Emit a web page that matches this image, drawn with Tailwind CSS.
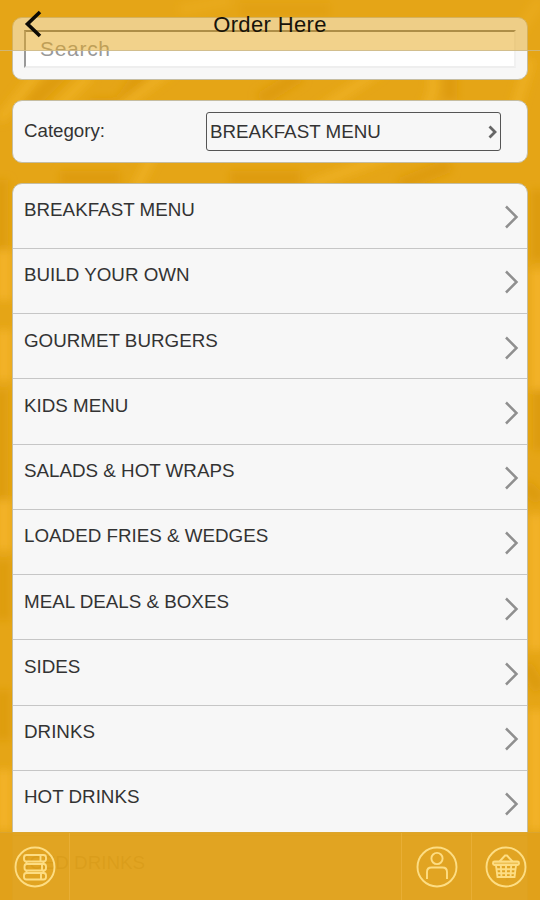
<!DOCTYPE html>
<html lang="en">
<head>
<meta charset="utf-8">
<title>Order Here</title>
<script src="https://cdn.jsdelivr.net/npm/@tailwindcss/browser@4"></script>
</head>
<body class="relative h-[900px] w-[540px] overflow-hidden bg-[#e5a516] font-['Liberation_Sans',Arial,sans-serif] text-[#333]">
<svg class="absolute inset-0 -z-10" width="540" height="900" viewBox="0 0 540 900" fill="none">
  <defs><filter id="soft" x="-20%" y="-20%" width="140%" height="140%"><feGaussianBlur stdDeviation="4"/></filter></defs>
  <g filter="url(#soft)">
    <path d="M30 105L75 60M90 105H120L150 60M260 100L300 75M450 65V100M60 178H120M230 178H300M400 185L450 165M240 10H330" stroke="#de9b0c" stroke-width="14"/>
    <path d="M0 120L40 70M55 110L90 75M110 115L170 70M320 110L380 70M425 110Q440 85 428 60M515 110L530 60M135 190L155 150M310 185L390 155M180 10L230 0M520 30L540 0" stroke="#eeb022" stroke-width="9"/>
    <path d="M0 180V250M0 390V500M3 560V620M3 690V740" stroke="#de9d0e" stroke-width="16"/>
    <path d="M4 250V300M4 330V380M4 500V550M4 770V830M538 270V390M536 515V650M536 710V830" stroke="#f3b226" stroke-width="16"/>
    <path d="M538 190V260M540 390V450M525 485L540 500M525 665L540 690" stroke="#dc9b10" stroke-width="14"/>
  </g>
</svg>

<main class="flex flex-col px-3 pt-[17px]">
  <section class="h-[63px] rounded-[10px] border border-[#c5bda2] bg-[#f7f7f7] px-[11px] pt-3">
    <div class="flex h-[38px] items-center border-2 border-t-[#777] border-r-[#f1f1f1] border-b-[#eee] border-l-[#999] bg-white pl-3.5 text-[21px] tracking-[0.7px] text-[#999]">Search</div>
  </section>
  <section class="mt-5 flex h-[63px] items-center justify-between rounded-[10px] border border-[#c5bda2] bg-[#f7f7f7] pr-[26px] pl-[11px]">
    <span class="text-[18.7px]">Category:</span>
    <div class="flex h-[39px] w-[295px] items-center justify-between rounded-[3px] border border-[#555] pr-[3px] pl-[3px]">
      <span class="pt-0.5 text-[18.8px]">BREAKFAST MENU</span>
      <svg width="9" height="14" viewBox="0 0 9 14" fill="none" stroke="#666" stroke-width="2.8"><path d="M1.500 1.500L7 7L1.500 12.500"/></svg>
    </div>
  </section>
  <ul id="menu" class="mt-[19.5px] rounded-t-[10px] border border-[#c5bda2] bg-[#f7f7f7]"></ul>
</main>

<header class="absolute inset-x-0 top-0 flex h-[51px] justify-center border-b border-[#c9b98d]/80 bg-[#e6a517]/50">
  <svg class="absolute top-[10px] left-6" width="18" height="28" viewBox="0 0 18 28" fill="none" stroke="#0c0a05" stroke-width="3.6"><path d="M16 2L3.500 14L16 26"/></svg>
  <h1 class="pt-[10px] text-[22px] leading-[30px] tracking-[0.35px] text-[#17130a]">Order Here</h1>
</header>

<footer class="absolute inset-x-0 bottom-0 flex h-[68px] border-t border-[#dba52f] bg-[#e0a11b]/97 text-[#fddd83]">
  <div class="flex w-[70px] items-center justify-center border-r border-[#e8ae35]">
    <svg width="42" height="42" viewBox="0 0 42 42" fill="none" stroke="currentColor" stroke-width="1.9"><circle cx="21" cy="21" r="19.5"/><rect x="10" y="9" width="22" height="6.500" rx="2.500"/><rect x="10.500" y="18" width="21.500" height="6.500" rx="2.500"/><rect x="10" y="27" width="22" height="6.500" rx="2.500"/><path d="M26.500 9v6M29.500 15.500v3M12.500 15.500v3M28 18v6M29.500 24.500v3M12.500 24.500v3M27 27v6"/></svg>
  </div>
  <div class="flex-1"></div>
  <div class="flex w-[70px] items-center justify-center border-l border-[#e8ae35]">
    <svg width="42" height="42" viewBox="0 0 42 42" fill="none" stroke="currentColor" stroke-width="1.9"><circle cx="21" cy="21" r="19.500"/><circle cx="21" cy="12.500" r="5.600"/><path d="M11 33V26Q11 21.500 15.500 21.500H26.500Q31 21.500 31 26V33"/></svg>
  </div>
  <div class="flex w-[69px] items-center justify-center border-l border-[#e8ae35]">
    <svg width="42" height="42" viewBox="0 0 42 42" fill="none" stroke="currentColor" stroke-width="1.9"><circle cx="21" cy="21" r="19.500"/><rect x="8" y="15.500" width="26" height="3.500" rx="1.500" fill="currentColor" fill-opacity=".5"/><path d="M14.500 15.500L20 9.500H22L27.500 15.500M11 19.500L12.500 31H29.500L31 19.500M15.800 20L16.500 31M21 20V31M26.200 20L25.500 31M11.500 23.300H30.500M12 27.200H30"/></svg>
  </div>
</footer>

<script>
const items = ["BREAKFAST MENU","BUILD YOUR OWN","GOURMET BURGERS","KIDS MENU","SALADS & HOT WRAPS","LOADED FRIES & WEDGES","MEAL DEALS & BOXES","SIDES","DRINKS","HOT DRINKS","ICED DRINKS"];
document.getElementById("menu").innerHTML = items.map(t => `
<li class="flex h-[65.25px] justify-between border-b border-[#c6c6c6] pr-[8px] pl-[11px]">
  <span class="pt-[15.5px] text-[18.8px] leading-[22px]">${t.replace("&","&amp;")}</span>
  <svg class="mt-[21.500px]" width="15" height="24" viewBox="0 0 15 24" fill="none" stroke="#8f8f8f" stroke-width="2.500"><path d="M2 1.500L12.500 12L2 22.500"/></svg>
</li>`).join("");
</script>
</body>
</html>
